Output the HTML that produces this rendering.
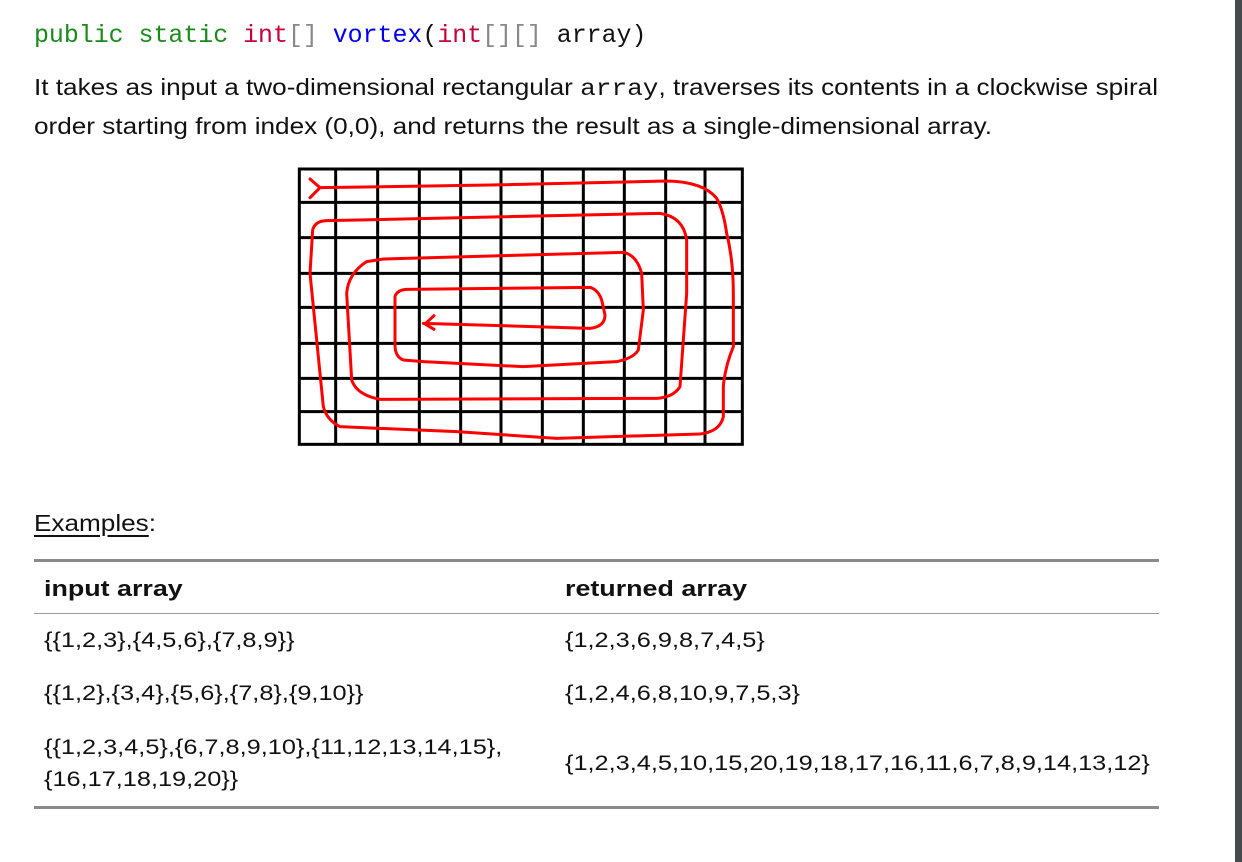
<!DOCTYPE html>
<html><head><meta charset="utf-8"><style>
html,body{margin:0;padding:0;background:#fff;width:1242px;height:862px;overflow:hidden;position:relative}
body{font-family:"Liberation Sans",sans-serif;color:#111}
.a{position:absolute;white-space:nowrap;transform-origin:0 50%}
.mono{font-family:"Liberation Mono",monospace}
.p{font-size:23px;transform:scaleX(1.136)}
.t{font-size:21px;transform:scaleX(1.205)}
.b{font-weight:bold;font-size:22px;transform:scaleX(1.22)}
</style></head><body>
<div style="position:absolute;left:1235px;top:0;width:7px;height:862px;background:#454a4d"></div>
<div class="a mono" style="left:34px;top:21px;font-size:24.9px;line-height:30px"><span style="color:#1a8a1a">public static</span> <span style="color:#c8003c">int</span><span style="color:#888">[]</span> <span style="color:#0000ee">vortex</span>(<span style="color:#c8003c">int</span><span style="color:#888">[][]</span> array)</div>
<div class="a p" style="left:34px;top:72px;line-height:30px">It takes as input a two-dimensional rectangular <span class="mono">array</span>, traverses its contents in a clockwise spiral</div>
<div class="a p" style="left:34px;top:111px;line-height:30px">order starting from index (0,0), and returns the result as a single-dimensional array.</div>

<svg style="position:absolute;left:290px;top:160px" width="460" height="290" viewBox="0 0 1380 870">
<g stroke="#000" stroke-width="9" fill="none">
<rect x="28" y="27" width="1329" height="826"/>
<path d="M137 27V853M263 27V853M388 27V853M512 27V853M633 27V853M757 27V853M880 27V853M1003 27V853M1127 27V853M1245 27V853"/>
<path d="M28 127H1357M28 233H1357M28 340H1357M28 442H1357M28 550H1357M28 655H1357M28 755H1357"/>
</g>
<g stroke="#f00" stroke-width="9" fill="none" stroke-linecap="round" stroke-linejoin="round">
<path d="M60 57L90 83L60 113"/>
<path d="M90 83L600 75L1130 63Q1240 65 1280 115Q1300 150 1310 220Q1330 300 1330 400L1330 560Q1305 620 1300 680L1300 770Q1290 815 1230 822L800 835L500 815L150 800Q110 780 100 740L60 340L68 210Q75 183 110 182L1110 160Q1180 170 1190 240L1190 400L1170 680Q1150 712 1100 715L270 718Q200 705 185 660L170 400Q175 340 230 305L280 297L1000 277Q1040 285 1055 340L1060 450L1045 570Q1030 595 980 605L700 620L400 605L340 600Q315 590 315 555L315 410Q320 390 350 388L900 382Q925 390 935 420L945 465Q945 500 900 505L400 490"/>
<path d="M432 467L405 492L432 508"/>
</g>
</svg>

<div class="a p" style="left:34px;top:508px;line-height:30px"><span style="text-decoration:underline;text-underline-offset:4px">Examples</span>:</div>
<div style="position:absolute;left:34px;top:559px;width:1125px;height:3px;background:#8a8a8a"></div>
<div class="a b" style="left:44px;top:576px">input array</div>
<div class="a b" style="left:565px;top:576px">returned array</div>
<div style="position:absolute;left:34px;top:613px;width:1125px;height:1px;background:#999"></div>
<div class="a t" style="left:44px;top:629px">{{1,2,3},{4,5,6},{7,8,9}}</div>
<div class="a t" style="left:565px;top:629px">{1,2,3,6,9,8,7,4,5}</div>
<div class="a t" style="left:44px;top:682px">{{1,2},{3,4},{5,6},{7,8},{9,10}}</div>
<div class="a t" style="left:565px;top:682px">{1,2,4,6,8,10,9,7,5,3}</div>
<div class="a t" style="left:44px;top:736px">{{1,2,3,4,5},{6,7,8,9,10},{11,12,13,14,15},</div>
<div class="a t" style="left:44px;top:768px">{16,17,18,19,20}}</div>
<div class="a t" style="left:565px;top:752px">{1,2,3,4,5,10,15,20,19,18,17,16,11,6,7,8,9,14,13,12}</div>
<div style="position:absolute;left:34px;top:806px;width:1125px;height:3px;background:#8a8a8a"></div>
</body></html>
